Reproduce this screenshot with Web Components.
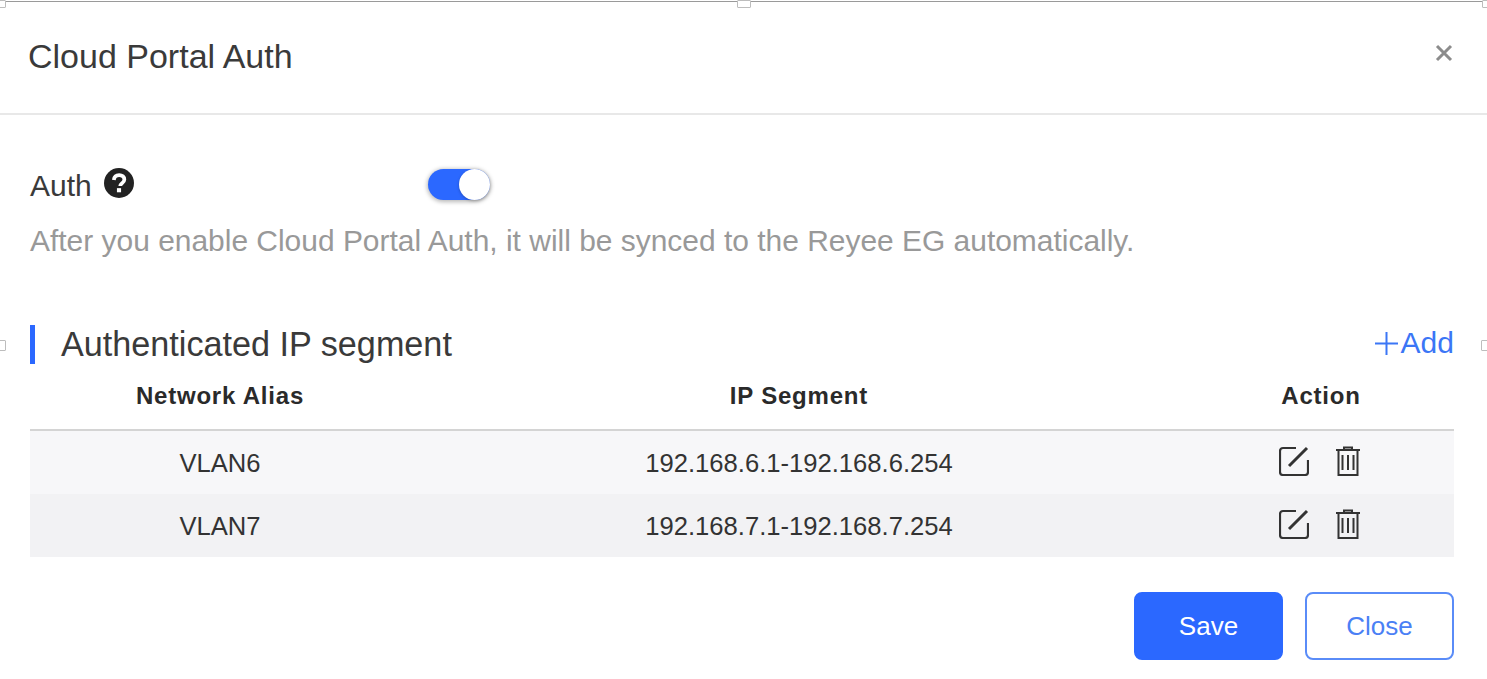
<!DOCTYPE html>
<html>
<head>
<meta charset="utf-8">
<title>Cloud Portal Auth</title>
<style>
html,body{margin:0;padding:0;background:#fff;}
body{font-family:"Liberation Sans",Arial,sans-serif;color:#333;overflow:hidden;}
</style>
</head>
<body>
<auth-dialog>
	<dialog-header slot="header">Cloud Portal Auth</dialog-header>
	<auth-row slot="body">Auth</auth-row>
	<p-hint slot="body">After you enable Cloud Portal Auth, it will be synced to the Reyee EG automatically.</p-hint>
	<section-title slot="body">Authenticated IP segment</section-title>
	<segment-table slot="body"></segment-table>
	<ui-button slot="footer" kind="primary">Save</ui-button>
	<ui-button slot="footer">Close</ui-button>
</auth-dialog>
<script>
const define = (name, html, setup) => {
	customElements.define(name, class extends HTMLElement{
		constructor(){
			super();
			const root = this.attachShadow({mode: "open"});
			root.innerHTML = html;
			if(setup) setup(root, this);
		}
	});
};

define("auth-dialog", `
<style>
:host{display:flex;flex-direction:column;width:1487px;height:679px;position:relative;box-sizing:border-box;overflow:hidden;background:#fff;}
.line{position:absolute;top:1px;left:0;right:0;height:1px;background:#9a9a9a;}
.h{position:absolute;width:9px;height:8px;border:1px solid #bdbdbd;background:#fff;box-sizing:border-box;border-radius:1px;}
.body{display:flex;flex-direction:column;padding:0 33px 0 30px;flex:1;}
.foot{display:flex;justify-content:flex-end;gap:22px;padding:0 33px 0 0;margin-bottom:19px;}
</style>
<div class="line"></div>
<div class="h" style="left:-3px;top:0"></div>
<div class="h" style="left:737px;top:0;width:14px"></div>
<div class="h" style="right:-3px;top:0;width:8px"></div>
<div class="h" style="left:-3px;top:340px;height:11px"></div>
<div class="h" style="right:-3px;top:340px;height:11px"></div>
<slot name="header"></slot>
<div class="body"><slot name="body"></slot></div>
<div class="foot"><slot name="footer"></slot></div>
`);

define("dialog-header", `
<style>
:host{display:flex;align-items:center;justify-content:space-between;height:115px;box-sizing:border-box;border-bottom:2px solid #e8e8e8;padding:0 33px 0 28px;font-size:34px;color:#3a3a3a;}
svg{display:block;margin-top:-7px;}
</style>
<span><slot></slot></span>
<svg width="20" height="20" viewBox="0 0 20 20"><path d="M3 3L17 17M17 3L3 17" stroke="#8c8c8c" stroke-width="3" fill="none"/></svg>
`);

define("auth-row", `
<style>
:host{display:flex;align-items:center;height:44px;margin-top:49px;font-size:30px;color:#3a3a3a;position:relative;}
.help{display:block;margin-left:12.500px;margin-top:-7px;}
.sw{position:absolute;left:398px;top:5px;}
</style>
<span><slot></slot></span>
<svg class="help" width="30" height="30" viewBox="0 0 32 32">
	<circle cx="16" cy="16" r="16" fill="#222"/>
	<path d="M10.500 12.800c.3-3.400 2.600-5.300 5.700-5.300 3.200 0 5.500 1.900 5.500 4.700 0 2.200-1.300 3.300-2.700 4.300-1.200.9-1.700 1.400-1.700 2.700" fill="none" stroke="#fff" stroke-width="4"/>
	<rect x="13.800" y="21.500" width="4.400" height="4.400" fill="#fff"/>
</svg>
<toggle-switch class="sw"></toggle-switch>
`);

define("toggle-switch", `
<style>
:host{display:block;width:62px;height:31px;border-radius:16px;background:#2b68ff;box-shadow:0 1px 4px 1px rgba(0,0,0,.28);position:relative;}
i{position:absolute;right:0;top:0;width:31px;height:31px;border-radius:50%;background:#fff;box-shadow:0 1px 3px rgba(0,0,0,.25);}
</style>
<i></i>
`);

define("p-hint", `
<style>
:host{display:block;font-size:29.950px;line-height:40px;color:#999;margin-top:13px;white-space:nowrap;}
</style>
<slot></slot>
`);

define("section-title", `
<style>
:host{display:flex;align-items:center;justify-content:space-between;height:40px;margin-top:63px;font-size:34.200px;color:#3a3a3a;}
.t{display:flex;align-items:center;gap:26px;}
.t::before{content:"";width:5px;height:39px;background:#2b68ff;}
.add{display:flex;align-items:center;color:#3b76f6;font-size:30px;gap:3px;margin-top:-2px;}
svg{display:block;}
</style>
<div class="t"><slot></slot></div>
<div class="add">
	<svg width="23" height="23" viewBox="0 0 23 23"><path d="M11.500 0V23M0 11.500H23" stroke="#3b76f6" stroke-width="2" fill="none"/></svg>
	<span>Add</span>
</div>
`);

const rowData = [
	["VLAN6", "192.168.6.1-192.168.6.254"],
	["VLAN7", "192.168.7.1-192.168.7.254"]
];

define("segment-table", `
<style>
:host{display:block;margin-top:6px;font-size:25.600px;color:#333;}
.row{display:grid;grid-template-columns:380px 778px 1fr;align-items:center;text-align:center;height:63px;}
.head{height:52px;border-bottom:2px solid #d4d4d4;font-weight:700;font-size:24px;letter-spacing:.8px;color:#2a2a2a;padding-bottom:7px;}
.rows .row{box-sizing:border-box;padding-top:1px;}
.row.a{background:#f7f7f9;}
.row.b{background:#f2f2f4;}
.acts{display:flex;justify-content:center;align-items:center;gap:27px;margin-top:-4px;padding-right:4px;}
svg{display:block;}
</style>
<div class="row head"><div>Network Alias</div><div>IP Segment</div><div>Action</div></div>
<div class="rows"></div>
`, (root) => {
	const rows = root.querySelector(".rows");
	rowData.forEach(([alias, segment], i) => {
		const row = document.createElement("div");
		row.className = "row " + (i ? "b" : "a");
		row.innerHTML = `<div>${alias}</div><div>${segment}</div>
		<div class="acts">
			<svg width="30" height="30" viewBox="0 0 30 30" fill="none" stroke="#333" stroke-width="2.200"><path d="M17 2H4a3 3 0 0 0-3 3v21a3 3 0 0 0 3 3h22a3 3 0 0 0 3-3V14"/><path d="M10 20L28 2" stroke-width="3"/></svg>
			<svg width="24" height="30" viewBox="0 0 24 30" fill="none" stroke="#333" stroke-width="2"><path d="M0 4H24M8 4V1.500H16V4M2.500 4V29H21.500V4M6.500 9V24M12 9V24M17.500 9V24"/></svg>
		</div>`;
		rows.appendChild(row);
	});
});

define("ui-button", `
<style>
:host{display:flex;align-items:center;justify-content:center;width:149px;height:68px;box-sizing:border-box;border-radius:8px;font-size:26px;border:2px solid #5a8cf8;color:#4a80f5;background:#fff;}
:host([kind="primary"]){background:#2b68ff;border-color:#2b68ff;color:#fff;}
</style>
<slot></slot>
`);
</script>
</body>
</html>
